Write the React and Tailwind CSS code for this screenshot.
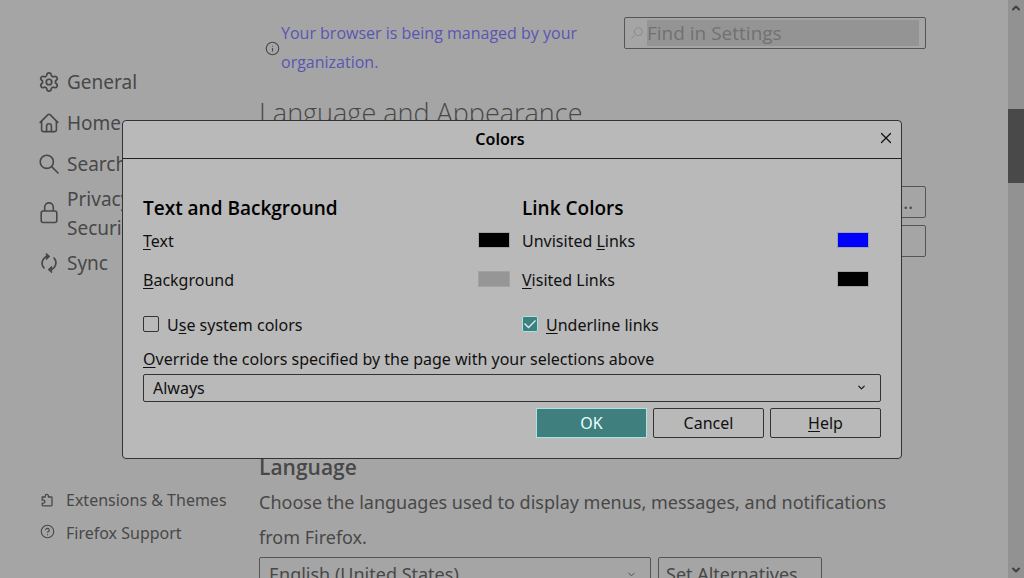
import React from "react";
import { Settings, Info, CircleHelp, X, ChevronDown, ChevronUp } from "lucide-react";

function HomeIcon() {
  return (
    <svg width="20" height="20" viewBox="0 0 20 20" fill="none" stroke="currentColor" strokeWidth="1.6" strokeLinejoin="round" strokeLinecap="round" aria-hidden="true">
      <path d="M1.2 9.4 9 1.6Q10 .8 11 1.6L18.8 9.4" />
      <path d="M2.6 8.2V17Q2.6 18.6 4.2 18.6H15.8Q17.4 18.6 17.4 17V8.2" />
      <path d="M7.6 18.4V13Q7.6 10.8 10 10.8Q12.4 10.8 12.4 13V18.4" />
    </svg>
  );
}

function SearchIcon({ className }) {
  return (
    <svg viewBox="0 0 20 20" fill="none" stroke="currentColor" strokeWidth="1.6" strokeLinecap="round" className={className} aria-hidden="true">
      <circle cx="7.8" cy="7.8" r="6.6" />
      <path d="M12.6 12.6 19 19" />
    </svg>
  );
}

function LockIcon() {
  return (
    <svg width="20" height="22" viewBox="0 0 20 22" fill="none" stroke="currentColor" strokeWidth="1.6" aria-hidden="true">
      <rect x="2.2" y="9" width="15.6" height="11.5" rx="2" />
      <path d="M5.7 9V5.2A4.3 4.3 0 0 1 14.3 5.2V9" />
    </svg>
  );
}

function SyncIcon() {
  return (
    <svg width="20" height="20" viewBox="0 0 20 20" fill="none" stroke="currentColor" strokeWidth="1.7" strokeLinecap="round" aria-hidden="true">
      <path d="M8.8 3.4A6.8 6.8 0 0 0 5 14.8" />
      <path d="M11.2 16.6A6.8 6.8 0 0 0 15 5.2" />
      <path d="M7.6 .6 10.8 3.4 7.6 6.4Z" fill="currentColor" strokeWidth="1" strokeLinejoin="round" />
      <path d="M12.4 13.6 9.2 16.6 12.4 19.4Z" fill="currentColor" strokeWidth="1" strokeLinejoin="round" />
    </svg>
  );
}

function PuzzleIcon() {
  return (
    <svg width="14" height="14" viewBox="0 0 14 14" fill="none" stroke="currentColor" strokeWidth="1.3" strokeLinejoin="round" aria-hidden="true">
      <path d="M2.2 5V4H5.2V3A1.6 1.6 0 0 1 8.4 3V4H11.2Q12 4 12 4.8V12Q12 12.8 11.2 12.8H3Q2.2 12.8 2.2 12V10.2H3.4A1.3 1.3 0 0 0 3.4 7.2H2.2Z" />
    </svg>
  );
}

const NAV = [
  { label: "General", icon: <Settings size={22} strokeWidth={1.9} className="shrink-0" /> },
  { label: "Home", icon: <HomeIcon /> },
  { label: "Search", icon: <SearchIcon className="size-5" /> },
  { label: "Privacy & Security", icon: <LockIcon /> },
  { label: "Sync", icon: <SyncIcon /> },
];

function Key({ children }) {
  return <span className="underline decoration-1 underline-offset-2">{children}</span>;
}

function Sidebar() {
  return (
    <aside className="flex w-[259px] shrink-0 flex-col pt-[62px] pb-[29px] pl-[38px]">
      <nav className="flex flex-col text-[19px] leading-[29px]">
        {NAV.map((item) => (
          <a key={item.label} href="#" className="flex min-h-[41px] items-center gap-[7px]">
            <span className="flex w-[22px] shrink-0 justify-center pb-0.5">{item.icon}</span>
            <span className="w-28">{item.label}</span>
          </a>
        ))}
      </nav>
      <div className="mt-auto flex flex-col text-[16px]">
        <a href="#" className="flex h-[33px] items-center gap-2.5">
          <span className="flex w-[18px] justify-center"><PuzzleIcon /></span>
          Extensions &amp; Themes
        </a>
        <a href="#" className="flex h-[33px] items-center gap-2.5">
          <span className="flex w-[18px] justify-center pb-0.5"><CircleHelp size={15} strokeWidth={1.8} /></span>
          Firefox Support
        </a>
      </div>
    </aside>
  );
}

function Content() {
  return (
    <main className="min-w-0 flex-1 pr-[82px]">
      <div className="flex items-start justify-between pt-[17px]">
        <div className="flex w-[330px] items-center gap-px pt-0.5 pl-1.5">
          <Info size={15} strokeWidth={1.8} className="shrink-0" />
          <a href="#" className="font-['Open_Sans',sans-serif] text-[16px] leading-[29px] text-[#5a55b4]">
            Your browser is being managed by your organization.
          </a>
        </div>
        <label className="flex h-8 w-[302px] items-center rounded-xs border border-[#555] pr-1.5 pl-1.5">
          <SearchIcon className="mr-1 size-3 shrink-0 -scale-x-100 text-[#8a8a8a]" />
          <input
            type="text"
            aria-label="Find in Settings"
            placeholder="Find in Settings"
            className="h-[26px] min-w-0 flex-1 bg-[#949494] font-['Open_Sans',sans-serif] text-[19px] outline-none placeholder:text-[#717171]"
          />
        </label>
      </div>
      <h1 className="mt-[18px] font-['Open_Sans',sans-serif] text-[27px] leading-[36px] font-light">Language and Appearance</h1>
      <div className="mt-[55px] flex flex-col items-end gap-[7px] text-[18px]">
        <button type="button" className="h-8 w-36 rounded-xs border border-[#555] pr-3 text-right">Advanced...</button>
        <button type="button" className="h-8 w-36 rounded-xs border border-[#555]">Colors...</button>
      </div>
      <h2 className="mt-[196px] font-['Open_Sans',sans-serif] text-[21px] leading-[28px] font-semibold">Language</h2>
      <p className="mt-1 text-[18px] leading-[35px]">
        Choose the languages used to display menus, messages, and notifications from Firefox.
      </p>
      <div className="mt-0.5 flex gap-[7px] text-[18px]">
        <div className="relative w-[392px]">
          <select aria-label="Display language" className="h-[34px] w-full appearance-none rounded-xs border border-[#555] px-[9px]">
            <option>English (United States)</option>
          </select>
          <ChevronDown size={11} className="pointer-events-none absolute top-3 right-3.5" />
        </div>
        <button type="button" className="h-[34px] w-[164px] rounded-xs border border-[#555] px-[7px] text-left">
          Set Alternatives...
        </button>
      </div>
    </main>
  );
}

function Scrollbar() {
  return (
    <div className="flex w-4 shrink-0 flex-col items-center bg-[#929292] text-[#404040]" aria-hidden="true">
      <ChevronUp size={12} strokeWidth={4} className="mt-0.5 shrink-0" />
      <div className="mt-[95px] h-[74px] w-full shrink-0 bg-[#494949]" />
      <ChevronDown size={12} strokeWidth={4} className="mt-auto mb-0.5 shrink-0" />
    </div>
  );
}

function ColorRow({ id, value, children }) {
  return (
    <div className="flex h-[39px] items-center justify-between pr-3">
      <label htmlFor={id}>{children}</label>
      <input
        id={id}
        type="color"
        defaultValue={value}
        className="mb-0.5 h-4 w-8 appearance-none border border-[#a2a2a2] [&::-webkit-color-swatch]:rounded-none [&::-webkit-color-swatch]:border-0 [&::-webkit-color-swatch-wrapper]:p-0"
      />
    </div>
  );
}

function Check({ id, checked, children }) {
  return (
    <div className="mt-[5px] flex h-10 items-center gap-2">
      <span className="relative mb-0.5 flex size-4">
        <input
          id={id}
          type="checkbox"
          defaultChecked={checked}
          className="peer size-4 appearance-none rounded-xs border border-[#333] checked:border-[#a8e4e0] checked:bg-[#3f7f7d]"
        />
        <svg viewBox="0 0 16 16" className="pointer-events-none absolute inset-0 hidden size-4 peer-checked:block" fill="none" stroke="#d5f5f3" strokeWidth="1.3" aria-hidden="true">
          <path d="M2.5 7.5 6.5 11.5 13.5 4.5" />
        </svg>
      </span>
      <label htmlFor={id}>{children}</label>
    </div>
  );
}

function ColorsDialog() {
  return (
    <div className="fixed inset-0 grid place-items-center">
      <section role="dialog" aria-labelledby="dialog-title" className="w-[780px] max-w-full rounded-sm border border-[#333] bg-[#b9b9b9] text-[16px] text-[#111]">
        <header className="flex h-[38px] items-center border-b border-[#222] pr-1.5">
          <h2 id="dialog-title" className="flex-1 text-center font-semibold text-black">Colors</h2>
          <button type="button" aria-label="Close" className="pb-0.5">
            <X size={18} strokeWidth={1.6} />
          </button>
        </header>
        <form className="px-5 pt-[37px] pb-5" onSubmit={(e) => e.preventDefault()}>
          <div className="grid grid-cols-[379fr_359fr]">
            <div>
              <h3 className="mb-0.5 font-['Open_Sans',sans-serif] text-[19px] leading-6 font-semibold text-black">Text and Background</h3>
              <ColorRow id="text" value="#000000"><Key>T</Key>ext</ColorRow>
              <ColorRow id="background" value="#969696"><Key>B</Key>ackground</ColorRow>
              <Check id="system">U<Key>s</Key>e system colors</Check>
            </div>
            <div>
              <h3 className="mb-0.5 font-['Open_Sans',sans-serif] text-[19px] leading-6 font-semibold text-black">Link Colors</h3>
              <ColorRow id="unvisited" value="#0000ff">Unvisited <Key>L</Key>inks</ColorRow>
              <ColorRow id="visited" value="#000000"><Key>V</Key>isited Links</ColorRow>
              <Check id="underline" checked><Key>U</Key>nderline links</Check>
            </div>
          </div>
          <label htmlFor="override" className="block pb-px leading-7"><Key>O</Key>verride the colors specified by the page with your selections above</label>
          <div className="relative">
            <select id="override" className="h-7 w-full appearance-none rounded-xs border border-[#333] px-[9px]">
              <option>Always</option>
            </select>
            <ChevronDown size={11} strokeWidth={2.5} className="pointer-events-none absolute top-2 right-3.5" />
          </div>
          <div className="mt-1.5 flex justify-end gap-1.5">
            <button type="submit" className="h-[30px] w-[111px] border border-[#a8e4e0] bg-[#3f7f7d] text-[#e8fffd]">OK</button>
            <button type="button" className="h-[30px] w-[111px] rounded-xs border border-[#333]">Cancel</button>
            <button type="button" className="h-[30px] w-[111px] rounded-xs border border-[#333]"><Key>H</Key>elp</button>
          </div>
        </form>
      </section>
    </div>
  );
}

export default function App() {
  return (
    <div className="flex h-screen overflow-hidden bg-[#a5a5a5] font-['Noto_Sans','Open_Sans',sans-serif] text-[#484848]">
      <Sidebar />
      <Content />
      <Scrollbar />
      <ColorsDialog />
    </div>
  );
}
